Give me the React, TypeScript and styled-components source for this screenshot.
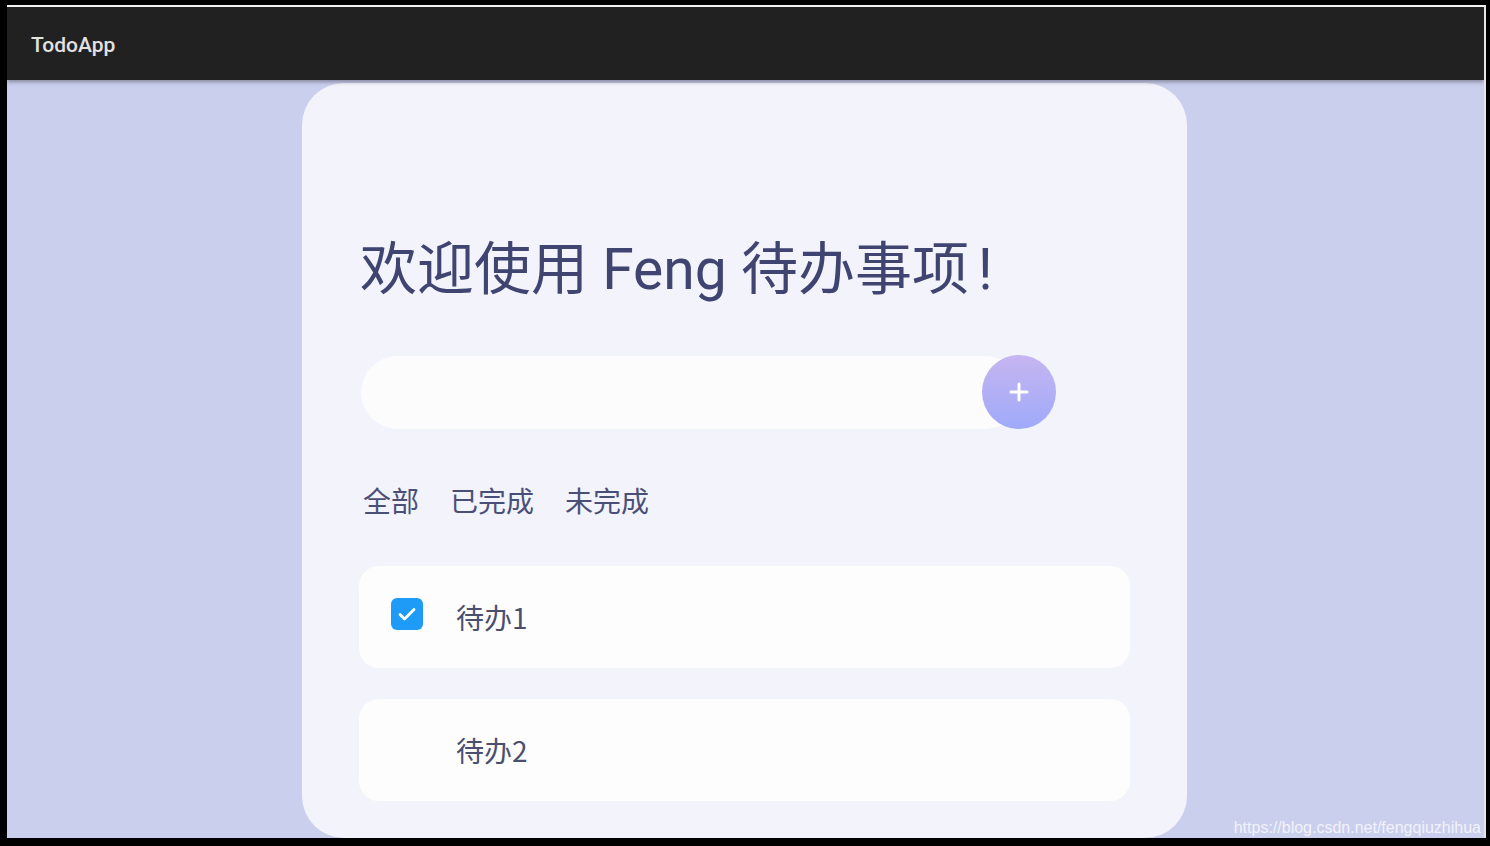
import React from "react";
import styled, { createGlobalStyle } from "styled-components";

const Global = createGlobalStyle`
  html, body { margin: 0; padding: 0; background: #000; }
  body { font-family: Roboto, "Noto Sans CJK SC", sans-serif; }
`;

const Frame = styled.div`
  width: 1490px;
  height: 846px;
  box-sizing: border-box;
  padding: 5px 4px 8px 7px;
  background: #000;
`;

const Screen = styled.div`
  position: relative;
  height: 100%;
  box-sizing: border-box;
  border-top: 2px solid #f2f2f2;
  border-right: 2px solid #e6e6e6;
  background: #cbcfee;
  display: flex;
  flex-direction: column;
  overflow: hidden;
`;

const Header = styled.header`
  position: relative;
  z-index: 2;
  height: 73px;
  flex: none;
  background: #212121;
  display: flex;
  align-items: center;
  padding-left: 24px;
  box-shadow: 0 2px 4px rgba(0, 0, 0, 0.35);
`;

const Brand = styled.div`
  color: #e2e2e2;
  font-size: 21px;
  font-weight: 500;
  margin-top: 2px;
`;

const Main = styled.main`
  flex: 1;
  display: flex;
  justify-content: center;
  padding-top: 3px;
  min-height: 0;
`;

const Card = styled.section`
  width: 885px;
  box-sizing: border-box;
  margin-left: -2px;
  background: #f2f3fb;
  border-radius: 42px;
  padding: 153px 57px 0;
  display: flex;
  flex-direction: column;
`;

const Title = styled.h1`
  margin: 0 0 0 1px;
  font-size: 57px;
  line-height: 68px;
  font-weight: 400;
  color: #3f4470;
  font-family: Roboto, "Noto Sans CJK SC", sans-serif;
`;

const Bang = styled.span`
  margin-left: 9px;
`;

const InputRow = styled.div`
  margin: 51px 0 0 2px;
  width: 695px;
  display: flex;
  align-items: center;
`;

const Field = styled.input`
  flex: 1;
  height: 73px;
  box-sizing: border-box;
  border: none;
  outline: none;
  border-radius: 37px;
  background: #fcfcfd;
  padding: 0 30px;
  font-size: 22px;
  margin-right: -40px;
`;

const AddButton = styled.button`
  position: relative;
  width: 74px;
  height: 74px;
  flex: none;
  border: none;
  border-radius: 50%;
  background: linear-gradient(180deg, #c6b5f1 0%, #9faaf9 100%);
  display: flex;
  align-items: center;
  justify-content: center;
  padding: 0;
`;

const Filters = styled.nav`
  margin: 51px 0 0 4px;
  display: flex;
  gap: 31px;
`;

const FilterTab = styled.span`
  font-size: 28px;
  line-height: 40px;
  color: #4a4f78;
  font-family: "Noto Sans CJK SC", sans-serif;
`;

const List = styled.ul`
  list-style: none;
  margin: 46px 0 0;
  padding: 0;
  display: flex;
  flex-direction: column;
  gap: 31px;
`;

const Item = styled.li`
  height: 102px;
  box-sizing: border-box;
  background: #fdfdfe;
  border-radius: 20px;
  display: flex;
  align-items: center;
  padding-left: 32px;
  gap: 33px;
`;

const Box = styled.span<{ $checked: boolean }>`
  width: 32px;
  height: 32px;
  border-radius: 6px;
  margin-top: -7px;
  background: ${(p) => (p.$checked ? "#1d9bf6" : "transparent")};
  display: flex;
  align-items: center;
  justify-content: center;
`;

const ItemText = styled.span`
  font-size: 28px;
  color: #4a4f6e;
  font-family: "Noto Sans CJK SC", sans-serif;
`;

const Watermark = styled.div`
  position: absolute;
  right: 3px;
  bottom: 1px;
  font-family: "Liberation Sans", Arial, sans-serif;
  font-size: 16px;
  color: rgba(255, 255, 255, 0.75);
`;

const todos = [
  { text: "待办1", done: true },
  { text: "待办2", done: false },
];

export default function App() {
  return (
    <Frame>
      <Global />
      <Screen>
        <Header>
          <Brand>TodoApp</Brand>
        </Header>
        <Main>
          <Card>
            <Title>
              欢迎使用 Feng 待办事项<Bang>!</Bang>
            </Title>
            <InputRow>
              <Field />
              <AddButton aria-label="add">
                <svg width="20" height="20" viewBox="0 0 20 20">
                  <path d="M10 2v16M2 10h16" stroke="#fff" strokeWidth="3" strokeLinecap="round" />
                </svg>
              </AddButton>
            </InputRow>
            <Filters>
              <FilterTab>全部</FilterTab>
              <FilterTab>已完成</FilterTab>
              <FilterTab>未完成</FilterTab>
            </Filters>
            <List>
              {todos.map((t) => (
                <Item key={t.text}>
                  <Box $checked={t.done}>
                    {t.done && (
                      <svg width="22" height="22" viewBox="0 0 22 22">
                        <path d="M4 11.5l4.5 4.5L18 6.5" fill="none" stroke="#fff" strokeWidth="2.8" strokeLinecap="round" strokeLinejoin="round" />
                      </svg>
                    )}
                  </Box>
                  <ItemText>{t.text}</ItemText>
                </Item>
              ))}
            </List>
          </Card>
        </Main>
        <Watermark>https://blog.csdn.net/fengqiuzhihua</Watermark>
      </Screen>
    </Frame>
  );
}
